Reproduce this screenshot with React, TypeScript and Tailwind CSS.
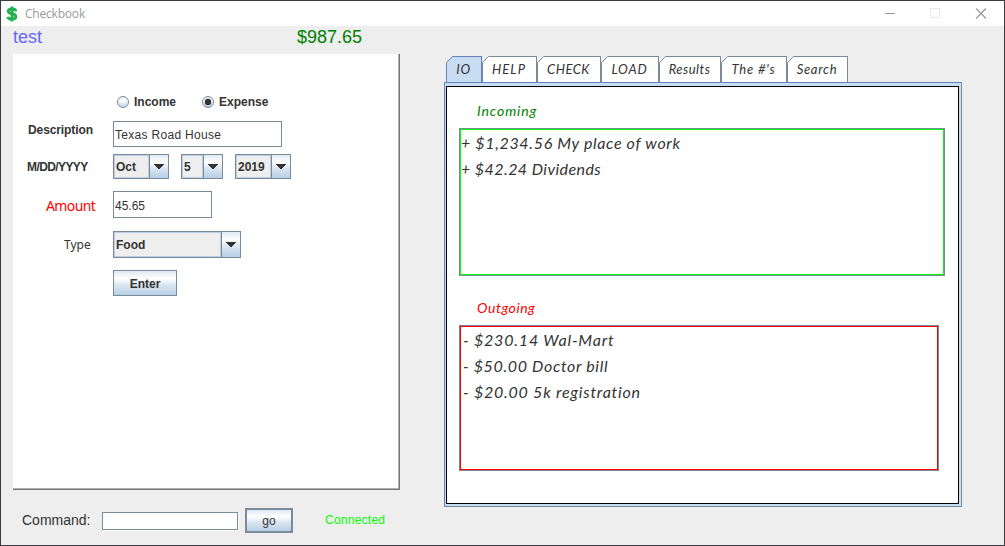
import React, { useState } from "react";

const hand = "font-['Lato',sans-serif] italic text-[#333333] whitespace-pre";
const metal = "bg-[linear-gradient(to_bottom,#dfe9f4_0%,#ffffff_32%,#dde8f3_55%,#b8cfe5_100%)]";

function Combo({ value, className, arrow }: { value: string; className: string; arrow: string }) {
  return (
    <div className={`flex shrink-0 border border-[#7a8a99] ${className}`}>
      <div className="flex flex-1 items-center border border-[#b8cfe5] bg-[#eeeeee] pl-px text-[12px] font-bold">
        {value}
      </div>
      <div className={`flex items-center justify-center border-l border-[#7a8a99] ${metal} ${arrow}`}>
        <svg width="10" height="5" viewBox="0 0 10 5" shapeRendering="crispEdges">
          <path d="M0 0h10v1H9v1H8v1H7v1H6v1H4V4H3V3H2V2H1V1H0z" fill="#333" />
        </svg>
      </div>
    </div>
  );
}

function Radio({ label, checked, onClick }: { label: string; checked: boolean; onClick: () => void }) {
  return (
    <button className="flex items-center text-[12px] font-bold" onClick={onClick}>
      <svg width="12" height="12" viewBox="0 0 12 12" className="mr-[5px]">
        <defs>
          <linearGradient id="radioFill" x1="0" y1="0" x2="0" y2="1">
            <stop offset="0" stopColor="#dfe9f4" />
            <stop offset="0.35" stopColor="#fff" />
            <stop offset="1" stopColor="#b8cfe5" />
          </linearGradient>
        </defs>
        <circle cx="6" cy="6" r="5.5" fill="url(#radioFill)" stroke="#7a8a99" />
        {checked && <circle cx="6" cy="6" r="3.2" fill="#333" />}
      </svg>
      {label}
    </button>
  );
}

const tabs = [
  { name: "IO", size: "w-[36px] tracking-[0.7px]" },
  { name: "HELP", size: "w-[55px] tracking-[1.1px]" },
  { name: "CHECK", size: "w-[64px] tracking-[0.5px]" },
  { name: "LOAD", size: "w-[58px] tracking-[0.8px]" },
  { name: "Results", size: "w-[62px] tracking-[0.5px]" },
  { name: "The #'s", size: "w-[66px] tracking-[0.8px]" },
  { name: "Search", size: "w-[61px] tracking-[0.7px]" },
];

function Tab({ name, size, active }: { name: string; size: string; active: boolean }) {
  return (
    <div className={`flex h-[26px] shrink-0 ${size}`}>
      <svg width="7" height="26" className="shrink-0">
        <path d="M0 26V6.5L6.5 0H7V26z" fill={active ? "#c8ddf2" : "#fff"} />
        <path d="M0.5 26V6.5L6.5 0.5H7" fill="none" stroke={active ? "#6382bf" : "#7a8a99"} />
      </svg>
      <div
        className={`flex flex-1 items-center justify-center border-t border-r pr-[7px] pt-px text-[13px] ${hand} ${
          active ? "border-[#6382bf] bg-[#c8ddf2]" : "border-[#7a8a99] bg-white"
        }`}
      >
        {name}
      </div>
    </div>
  );
}

export default function App() {
  const [kind, setKind] = useState("Expense");
  return (
    <div className="flex h-[546px] w-[1005px] flex-col overflow-hidden border border-[#3c3c3e] bg-[#eeeeee] font-['Liberation_Sans',Arial,sans-serif] text-[#333333]">
      <header className="flex h-[25px] shrink-0 items-center bg-white pl-[5px] font-['Open_Sans',sans-serif] text-[12px] text-[#999999]">
        <svg width="12" height="16" viewBox="0 0 12 16" fill="none" stroke="#22b14c">
          <path d="M6 0.5V15.5" strokeWidth="2.8" />
          <path d="M9.8 5.2C9.5 3.5 8 3 6 3C3.8 3 2.3 3.8 2.3 5.3C2.3 7 4 7.4 6 7.8C8.2 8.2 9.8 8.8 9.8 10.7C9.8 12.2 8.2 13 6 13C3.8 13 2.2 12.4 1.8 10.8" strokeWidth="3" />
        </svg>
        <span className="ml-[7px] tracking-[-0.2px]">Checkbook</span>
        <svg className="ml-auto mr-[17px]" width="102" height="11" shapeRendering="crispEdges" fill="none">
          <path d="M0 5.5h10" stroke="#999" />
          <path d="M45.500 0.5h9v9h-9z" stroke="#e9e9e9" />
          <path d="M91 0.500l10 10M101 0.500l-10 10" stroke="#999" shapeRendering="auto" strokeWidth="1.2" />
        </svg>
      </header>
      <main className="flex flex-1">
        <section className="ml-3 flex w-[387px] shrink-0 flex-col">
          <div className="flex h-[28px] shrink-0 text-[18px] leading-[22px]">
            <span className="w-[284px] text-[#6666ff]">test</span>
            <span className="text-[#008000]">$987.65</span>
          </div>
          <div className="flex h-[436px] shrink-0 flex-col border-r border-b border-[#777777] bg-white">
            <div className="flex flex-1 flex-col border-r border-b border-[#b0b0b0] pt-[38px]">
              <div className="ml-[104px] flex h-[20px] items-center gap-[26px]">
                <Radio label="Income" checked={kind === "Income"} onClick={() => setKind("Income")} />
                <Radio label="Expense" checked={kind === "Expense"} onClick={() => setKind("Expense")} />
              </div>
              <div className="mt-[9px] flex h-[26px]">
                <span className="w-[100px] pl-[15px] text-[12px] leading-[18px] font-bold tracking-[-0.1px]">Description</span>
                <input className="w-[169px] border border-[#7a8a99] bg-white px-px pt-[2px] text-[12px] tracking-[0.3px] outline-none" defaultValue="Texas Road House" />
              </div>
              <div className="mt-[7px] flex h-[25px]">
                <span className="w-[100px] pl-[14px] text-[12px] leading-[26px] font-bold tracking-[-0.6px]">M/DD/YYYY</span>
                <Combo value="Oct" className="w-[56px]" arrow="w-[19px]" />
                <Combo value="5" className="ml-3 w-[42px]" arrow="w-[19px]" />
                <Combo value="2019" className="ml-3 w-[56px]" arrow="w-[19px]" />
              </div>
              <div className="mt-[12px] flex h-[27px]">
                <span className="w-[100px] pl-[33px] font-['Noto_Sans',sans-serif] text-[14px] leading-[29px] tracking-[-0.6px] text-[#ff0000]">Amount</span>
                <input className="w-[99px] border border-[#7a8a99] bg-white px-px pt-[2px] text-[12px] outline-none" defaultValue="45.65" />
              </div>
              <div className="mt-[13px] flex h-[27px]">
                <span className="w-[100px] pl-[51px] font-['Noto_Sans',sans-serif] text-[12px] leading-[27px]">Type</span>
                <Combo value="Food" className="w-[128px]" arrow="w-[19px]" />
              </div>
              <button className={`mt-[12px] ml-[100px] h-[26px] w-[64px] border border-[#7a8a99] pt-[2px] text-[12px] font-bold ${metal}`}>Enter</button>
            </div>
          </div>
          <div className="flex h-[55px] items-center pt-[6px] pl-[9px]">
            <span className="w-[80px] text-[14px]">Command:</span>
            <input className="h-[18px] w-[136px] border border-[#7a8a99] bg-white shadow-[1px_1px_0_#ffffff] outline-none" />
            <button className={`ml-[7px] h-[25px] w-[48px] border-2 border-[#7a8a99] text-[12px] ${metal}`}>go</button>
            <span className="ml-[32px] -mt-[2px] text-[12px] tracking-[0.25px] text-[#00ff00]">Connected</span>
          </div>
        </section>
        <section className="ml-[44px] flex w-[518px] shrink-0 flex-col pt-[30px]">
          <nav className="flex pl-[2px]">
            {tabs.map((t, i) => (
              <Tab key={t.name} name={t.name} size={t.size} active={i === 0} />
            ))}
          </nav>
          <div className="h-[425px] border border-[#6382bf] border-r-[#7a8a99] border-b-[#7a8a99] bg-[#c8ddf2] pt-[3px] pr-[2px] pb-[2px] pl-px">
            <div className="flex h-full flex-col border border-black bg-white pl-[12px]">
              <h2 className={`mt-[13px] h-[28px] pl-[18px] text-[14px] leading-[22px] tracking-[0.9px] ${hand} text-[#008000]!`}>Incoming</h2>
              <div className="h-[148px] w-[486px] border border-[#7a8a99]">
                <div className={`h-full border border-[#00ff00] text-[16px] leading-[26px] ${hand}`}>
                  <p className="tracking-[0.66px]">+ $1,234.56 My place of work</p>
                  <p className="tracking-[0.42px]">+ $42.24 Dividends</p>
                </div>
              </div>
              <h2 className={`mt-[21px] h-[28px] pl-[18px] text-[14px] leading-[22px] tracking-[0.55px] ${hand} text-[#ff0000]!`}>Outgoing</h2>
              <div className="h-[146px] w-[480px] border border-[#7a8a99]">
                <div className={`h-full border border-[#ff0000] pl-[2px] text-[16px] leading-[26px] ${hand}`}>
                  <p className="tracking-[0.8px]">- $230.14 Wal-Mart</p>
                  <p className="tracking-[0.65px]">- $50.00 Doctor bill</p>
                  <p className="tracking-[0.76px]">- $20.00 5k registration</p>
                </div>
              </div>
            </div>
          </div>
        </section>
      </main>
    </div>
  );
}
